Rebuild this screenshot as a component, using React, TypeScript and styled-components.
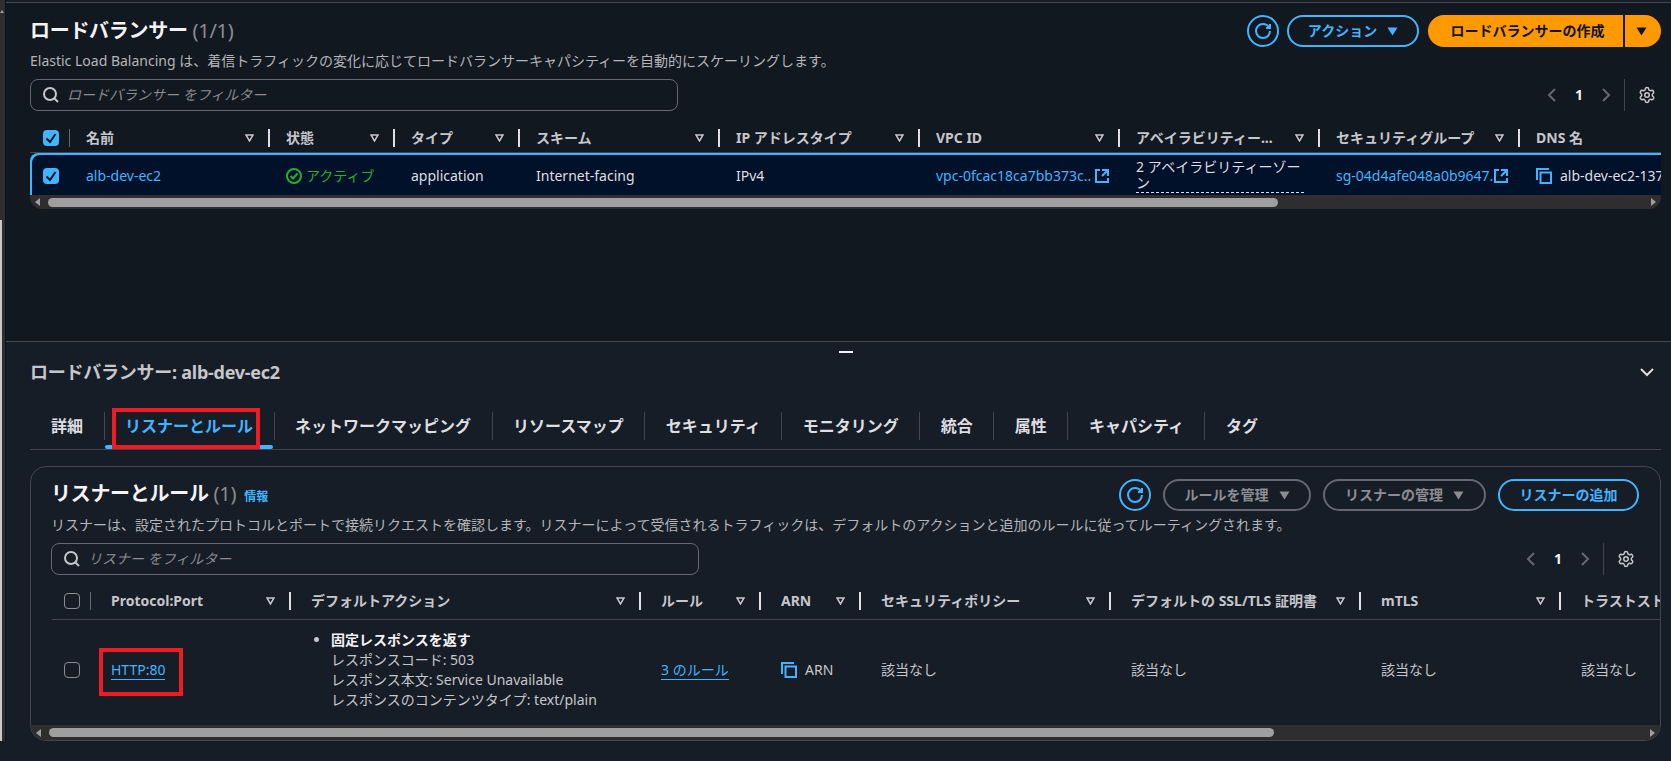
import React from "react";
import styled, { createGlobalStyle } from "styled-components";
import { Settings } from "lucide-react";

const Global = createGlobalStyle`
  html, body { margin: 0; padding: 0; background: #161d26; }
  body { font-family: "Noto Sans", "Noto Sans CJK JP", sans-serif; font-size: 14px; line-height: 20px; color: #c6c6cd; }
  * { box-sizing: border-box; }
`;

const Page = styled.div`
  display: flex;
  width: 1671px;
  height: 761px;
  overflow: hidden;
  background: #161d26;
`;

const SideScroll = styled.div`
  flex: none;
  width: 6px;
  height: 741px;
  background: #2e2e2e;
  border-right: 1px solid #0f141a;
  display: flex;
  flex-direction: column;
  justify-content: space-between;
`;
const SideArrow = styled.div`
  width: 0;
  height: 0;
  margin-top: 10px;
  border-left: 2px solid transparent;
  border-right: 2px solid transparent;
  border-bottom: 3px solid #9f9f9f;
`;
const SideThumb = styled.div`
  width: 2px;
  height: 521px;
  background: #c9c9c9;
`;

const Main = styled.div`
  flex: 1;
  min-width: 0;
  display: flex;
  flex-direction: column;
`;

const TopPanel = styled.section`
  flex: none;
  height: 340px;
  margin-top: 2px;
  border-top: 1px solid #424650;
  border-bottom: 1px solid #424650;
  background: #12181f;
  padding: 12px 10px 0 24px;
`;

const BottomPanel = styled.section`
  flex: 1;
  padding: 0 10px 0 24px;
  background: #161d26;
  display: flex;
  flex-direction: column;
`;

const TitleRow = styled.div`
  display: flex;
  align-items: center;
  justify-content: space-between;
  height: 32px;
`;
const Title = styled.h2`
  margin: 0;
  font-size: 20px;
  line-height: 24px;
  font-weight: 700;
  color: #f3f3f7;
  display: flex;
  align-items: baseline;
  letter-spacing: -0.3px;
`;
const Count = styled.span`
  font-weight: 400;
  color: #8c8c94;
  margin-left: 5px;
`;
const InfoLink = styled.a`
  font-size: 12px;
  font-weight: 700;
  color: #42b4ff;
  letter-spacing: 0;
  margin-left: 8px;
`;
const Actions = styled.div`
  display: flex;
  align-items: center;
`;
const RoundIcon = styled.button<{ $mr: number }>`
  width: 32px;
  height: 32px;
  padding: 0;
  border-radius: 50%;
  border: 2px solid #42b4ff;
  background: transparent;
  color: #42b4ff;
  display: flex;
  align-items: center;
  justify-content: center;
  margin-right: ${(p) => p.$mr}px;
`;
const PillButton = styled.button<{ $w: number; $muted?: boolean }>`
  width: ${(p) => p.$w}px;
  height: 32px;
  padding: 0;
  border-radius: 16px;
  border: 2px solid ${(p) => (p.$muted ? "#656871" : "#42b4ff")};
  background: transparent;
  color: ${(p) => (p.$muted ? "#8c8c94" : "#42b4ff")};
  font: inherit;
  font-weight: 700;
  display: flex;
  align-items: center;
  justify-content: center;
  gap: 10px;
  margin-right: 12px;
  &:last-child { margin-right: 0; }
`;
const SplitButton = styled.div`
  display: flex;
  height: 32px;
  width: 233px;
  color: #0f141a;
  font-weight: 700;
  margin-left: -3px;
`;
const SplitMain = styled.div`
  flex: 1;
  background: #ff9900;
  border-radius: 16px 0 0 16px;
  display: flex;
  align-items: center;
  justify-content: center;
  padding-left: 4px;
`;
const SplitDrop = styled.div`
  width: 36px;
  margin-left: 2px;
  background: #ff9900;
  border-radius: 0 16px 16px 0;
  display: flex;
  align-items: center;
  justify-content: center;
  padding-right: 4px;
`;

const Description = styled.p<{ $mt: number }>`
  margin: ${(p) => p.$mt}px 0 0;
  line-height: 20px;
  color: #b4b4bb;
  white-space: nowrap;
`;

const FilterRow = styled.div<{ $pr: number }>`
  display: flex;
  align-items: center;
  justify-content: space-between;
  height: 32px;
  margin-top: 8px;
  padding-right: ${(p) => p.$pr}px;
`;
const FilterBox = styled.div`
  width: 648px;
  height: 32px;
  border: 1px solid #656871;
  border-radius: 8px;
  display: flex;
  align-items: center;
  padding-left: 12px;
  color: #c6c6cd;
`;
const FilterText = styled.span`
  margin-left: 8px;
  font-style: italic;
  color: #8c8c94;
`;
const Pager = styled.div`
  display: flex;
  align-items: center;
  height: 32px;
  color: #656871;
`;
const PageNumber = styled.span`
  width: 28px;
  margin: 0 8px;
  text-align: center;
  font-weight: 700;
  color: #f3f3f7;
`;
const PagerDivider = styled.div`
  width: 1px;
  height: 32px;
  background: #424650;
  margin: 0 13px 0 13px;
`;
const GearWrap = styled.div`
  display: flex;
  color: #c6c6cd;
`;

const TableWrap = styled.div<{ $mt: number; $ml?: number }>`
  margin: ${(p) => p.$mt}px 0 0 ${(p) => p.$ml ?? 0}px;
  overflow: hidden;
`;
const HeadRow = styled.div<{ $h: number; $pt: number; $pb: number }>`
  display: flex;
  height: ${(p) => p.$h}px;
  border-bottom: 1px solid #424650;
  padding: ${(p) => p.$pt}px 0 ${(p) => p.$pb}px;
  width: 2200px;
`;
const SelectCell = styled.div<{ $w: number; $pl: number }>`
  flex: none;
  width: ${(p) => p.$w}px;
  padding-left: ${(p) => p.$pl}px;
  display: flex;
  align-items: center;
  justify-content: space-between;
`;
const ThinSep = styled.div`
  width: 1px;
  height: 18px;
  background: #5f6b7a;
`;
const HeadCell = styled.div<{ $w: number; $pad: number }>`
  flex: none;
  width: ${(p) => p.$w}px;
  padding-left: ${(p) => p.$pad}px;
  display: flex;
  align-items: center;
  font-weight: 700;
  color: #c6c6cd;
  white-space: nowrap;
`;
const HeadLabel = styled.span`
  flex: 1;
  min-width: 0;
  overflow: hidden;
`;
const HeadSep = styled.div`
  flex: none;
  width: 2px;
  height: 18px;
  background: #dedee3;
  margin-left: 14px;
`;
const SortIcon = styled.svg`
  flex: none;
  width: 9px;
  height: 8px;
  margin-left: 4px;
`;

const SelectedRow = styled.div`
  display: flex;
  align-items: center;
  height: 42px;
  width: 2200px;
  background: #001129;
  box-shadow: inset 2px 2px 0 #42b4ff;
  border-top-left-radius: 8px;
  color: #dedee3;
  padding-top: 4px;
`;
const PlainRow = styled.div`
  display: flex;
  align-items: center;
  height: 105px;
  width: 2200px;
  padding-bottom: 5px;
  color: #c6c6cd;
`;
const Cell = styled.div<{ $w: number; $pad: number }>`
  flex: none;
  width: ${(p) => p.$w}px;
  padding-left: ${(p) => p.$pad}px;
  display: flex;
  align-items: center;
  white-space: nowrap;
`;
const Check = styled.span<{ $on?: boolean }>`
  flex: none;
  width: 16px;
  height: 16px;
  border-radius: 4px;
  display: flex;
  align-items: center;
  justify-content: center;
  background: ${(p) => (p.$on ? "#42b4ff" : "transparent")};
  border: ${(p) => (p.$on ? "none" : "1px solid #8c8c94")};
`;
const Link = styled.a<{ $w?: number }>`
  color: #42b4ff;
  ${(p) => (p.$w ? `width: ${p.$w}px;` : "")}
`;
const LinkIcon = styled.svg`
  flex: none;
  width: 16px;
  height: 16px;
  fill: none;
  stroke: #42b4ff;
  stroke-width: 2;
`;
const OkText = styled.span`
  color: #29ad32;
  margin-left: 4px;
`;
const DashedText = styled.span`
  display: block;
  width: 168px;
  white-space: normal;
  line-height: 16px;
  padding-bottom: 1px;
  border-bottom: 1px dashed #dedee3;
`;
const CopyText = styled.span`
  margin-left: 8px;
`;
const Underlined = styled.a`
  position: relative;
  color: #42b4ff;
  border-bottom: 1px solid #42b4ff;
  line-height: 18px;
`;
const Annotation = styled.span<{ $t: number; $r: number; $b: number; $l: number }>`
  position: absolute;
  top: ${(p) => p.$t}px;
  right: ${(p) => p.$r}px;
  bottom: ${(p) => p.$b}px;
  left: ${(p) => p.$l}px;
  border: 4px solid #ed1c24;
  pointer-events: none;
`;

const ActionList = styled.ul`
  margin: 0;
  padding: 0 0 0 20px;
  line-height: 20px;
`;
const ActionItem = styled.li`
  color: #c6c6cd;
  &::marker { color: #c6c6cd; }
`;
const ActionHead = styled.div`
  font-weight: 700;
  color: #f3f3f7;
`;

const ScrollTrack = styled.div<{ $h: number; $r: number }>`
  height: ${(p) => p.$h}px;
  background: #2e2e2e;
  border-radius: 0 0 ${(p) => p.$r}px ${(p) => p.$r}px;
  display: flex;
  align-items: center;
  padding: 0 5px;
`;
const ScrollArrow = styled.span<{ $dir: "l" | "r"; $w: number }>`
  flex: none;
  width: 0;
  height: 0;
  border-top: 4px solid transparent;
  border-bottom: 4px solid transparent;
  ${(p) => (p.$dir === "l" ? "border-right" : "border-left")}: 5px solid #9f9f9f;
  margin-right: ${(p) => p.$w}px;
`;
const ScrollThumb = styled.span<{ $w: number }>`
  flex: none;
  width: ${(p) => p.$w}px;
  height: 9px;
  border-radius: 5px;
  background: #9f9f9f;
`;
const Spring = styled.span`
  flex: 1;
`;

const Handle = styled.div`
  flex: none;
  align-self: center;
  width: 14px;
  height: 2px;
  margin: 9px 0 0;
  background: #f3f3f7;
`;
const DetailHead = styled.div`
  display: flex;
  align-items: center;
  justify-content: space-between;
  height: 24px;
  margin-top: 7px;
  padding-right: 6px;
`;
const DetailTitle = styled.h3`
  margin: 0;
  font-size: 18px;
  line-height: 24px;
  font-weight: 700;
  color: #c6c6cd;
  letter-spacing: -0.25px;
`;
const TabBar = styled.nav`
  display: flex;
  align-items: flex-start;
  height: 38px;
  margin-top: 28px;
  padding-left: 0.5px;
  border-bottom: 1px solid #424650;
`;
const Tab = styled.div<{ $active?: boolean; $last?: boolean }>`
  position: relative;
  flex: none;
  display: flex;
  align-items: center;
  height: 28px;
  padding: 0 20.5px;
  font-size: 16px;
  font-weight: 700;
  color: ${(p) => (p.$active ? "#42b4ff" : "#dedee3")};
  border-right: ${(p) => (p.$last ? "none" : "1px solid #424650")};
`;
const TabLine = styled.span`
  position: absolute;
  left: 0;
  right: 1px;
  top: 33px;
  height: 4px;
  border-radius: 2px;
  background: #42b4ff;
`;
const Card = styled.div`
  margin-top: 16px;
  height: 275px;
  border: 1px solid #424650;
  border-radius: 16px;
  overflow: hidden;
  display: flex;
  flex-direction: column;
`;
const CardHead = styled.div`
  padding: 12px 21px 0 20px;
`;

const Caret = ({ color }: { color: string }) => (
  <svg width="11" height="9" viewBox="0 0 11 9"><path d="M0.5 0.5h10L5.5 8.5z" fill={color} /></svg>
);
const Refresh = () => (
  <svg width="16" height="16" viewBox="0 0 16 16" fill="none" stroke="currentColor" strokeWidth="2">
    <path d="M15 8c0 3.87-3.13 7-7 7s-7-3.13-7-7 3.13-7 7-7c2.79 0 5.2 1.63 6.33 4" />
    <path d="M15 1v4h-4" />
  </svg>
);
const Search = () => (
  <svg width="16" height="16" viewBox="0 0 16 16" fill="none" stroke="currentColor" strokeWidth="2">
    <circle cx="7" cy="7" r="6" /><path d="m11 11 4 4" />
  </svg>
);
const Chevron = ({ dir }: { dir: "l" | "r" }) => (
  <svg width="10" height="14" viewBox="0 0 10 14" fill="none" stroke="currentColor" strokeWidth="2">
    <path d={dir === "l" ? "M8 1 2 7l6 6" : "M2 1l6 6-6 6"} />
  </svg>
);
const Sort = () => (
  <SortIcon viewBox="0 0 9 8"><path d="M1 1h7L4.5 7z" fill="none" stroke="#c6c6cd" strokeWidth="1.5" /></SortIcon>
);
const Tick = () => (
  <svg width="12" height="12" viewBox="0 0 12 12" fill="none" stroke="#0f141a" strokeWidth="2"><path d="M1.5 6.5 5 10l5.5-8" /></svg>
);
const ExternalIcon = () => (
  <LinkIcon viewBox="0 0 16 16"><path d="M14 8.01v-6H8M14.02 2 8 8.01M6 2.01H2v12h12v-3.99" /></LinkIcon>
);
const CopyIcon = () => (
  <LinkIcon viewBox="0 0 16 16"><path d="M1 12V1h12" /><rect x="4.5" y="4.5" width="10.5" height="10.5" /></LinkIcon>
);
const OkIcon = () => (
  <svg width="16" height="16" viewBox="0 0 16 16" fill="none" stroke="#29ad32" strokeWidth="2">
    <circle cx="8" cy="8" r="7" /><path d="m4.5 8 2.5 2.5 4.5-5" />
  </svg>
);
const PagerChunk = () => (
  <Pager>
    <Chevron dir="l" /><PageNumber>1</PageNumber><Chevron dir="r" />
    <PagerDivider />
    <GearWrap><Settings size={18} strokeWidth={2} /></GearWrap>
  </Pager>
);

const topCols: [string, number][] = [
  ["名前", 200], ["状態", 125], ["タイプ", 125], ["スキーム", 200], ["IP アドレスタイプ", 200],
  ["VPC ID", 200], ["アベイラビリティー...", 200], ["セキュリティグループ", 200],
];
const bottomCols: [string, number][] = [
  ["Protocol:Port", 200], ["デフォルトアクション", 350], ["ルール", 120], ["ARN", 100],
  ["セキュリティポリシー", 250], ["デフォルトの SSL/TLS 証明書", 250], ["mTLS", 200],
];
const tabs = ["詳細", "リスナーとルール", "ネットワークマッピング", "リソースマップ", "セキュリティ", "モニタリング", "統合", "属性", "キャパシティ", "タグ"];

export default function App() {
  return (
    <>
      <Global />
      <Page>
        <SideScroll>
          <SideArrow />
          <SideThumb />
        </SideScroll>
        <Main>
          <TopPanel>
            <TitleRow>
              <Title>ロードバランサー<Count>(1/1)</Count></Title>
              <Actions>
                <RoundIcon $mr={8}><Refresh /></RoundIcon>
                <PillButton $w={132}>アクション<Caret color="#42b4ff" /></PillButton>
                <SplitButton>
                  <SplitMain>ロードバランサーの作成</SplitMain>
                  <SplitDrop><Caret color="#0f141a" /></SplitDrop>
                </SplitButton>
              </Actions>
            </TitleRow>
            <Description $mt={4}>Elastic Load Balancing は、着信トラフィックの変化に応じてロードバランサーキャパシティーを自動的にスケーリングします。</Description>
            <FilterRow $pr={5}>
              <FilterBox><Search /><FilterText>ロードバランサー をフィルター</FilterText></FilterBox>
              <PagerChunk />
            </FilterRow>
            <TableWrap $mt={9}>
              <HeadRow $h={33} $pt={3} $pb={0}>
                <SelectCell $w={40} $pl={13}><Check $on><Tick /></Check><ThinSep /></SelectCell>
                {topCols.map(([label, w]) => (
                  <HeadCell key={label} $w={w} $pad={16}><HeadLabel>{label}</HeadLabel><Sort /><HeadSep /></HeadCell>
                ))}
                <HeadCell $w={200} $pad={16}>DNS 名</HeadCell>
              </HeadRow>
              <SelectedRow>
                <SelectCell $w={40} $pl={13}><Check $on><Tick /></Check></SelectCell>
                <Cell $w={200} $pad={16}><Link>alb-dev-ec2</Link></Cell>
                <Cell $w={125} $pad={16}><OkIcon /><OkText>アクティブ</OkText></Cell>
                <Cell $w={125} $pad={16}>application</Cell>
                <Cell $w={200} $pad={16}>Internet-facing</Cell>
                <Cell $w={200} $pad={16}>IPv4</Cell>
                <Cell $w={200} $pad={16}><Link $w={158}>vpc-0fcac18ca7bb373c..</Link><ExternalIcon /></Cell>
                <Cell $w={200} $pad={16}><DashedText>2 アベイラビリティーゾーン</DashedText></Cell>
                <Cell $w={200} $pad={16}><Link>sg-04d4afe048a0b9647.</Link><ExternalIcon /></Cell>
                <Cell $w={200} $pad={16}><CopyIcon /><CopyText>alb-dev-ec2-137</CopyText></Cell>
              </SelectedRow>
              <ScrollTrack $h={14} $r={12}>
                <ScrollArrow $dir="l" $w={8} />
                <ScrollThumb $w={1230} />
                <Spring />
                <ScrollArrow $dir="r" $w={0} />
              </ScrollTrack>
            </TableWrap>
          </TopPanel>
          <BottomPanel>
            <Handle />
            <DetailHead>
              <DetailTitle>ロードバランサー: alb-dev-ec2</DetailTitle>
              <svg width="16" height="16" viewBox="0 0 16 16" fill="none" stroke="#dedee3" strokeWidth="2"><path d="m2 5 6 6 6-6" /></svg>
            </DetailHead>
            <TabBar>
              {tabs.map((t, i) => (
                <Tab key={t} $active={i === 1} $last={i === tabs.length - 1}>
                  {t}
                  {i === 1 && <TabLine />}
                  {i === 1 && <Annotation $t={-4} $r={14} $b={-9} $l={7} />}
                </Tab>
              ))}
            </TabBar>
            <Card>
              <CardHead>
                <TitleRow>
                  <Title>リスナーとルール<Count>(1)</Count><InfoLink>情報</InfoLink></Title>
                  <Actions>
                    <RoundIcon $mr={12}><Refresh /></RoundIcon>
                    <PillButton $w={148} $muted>ルールを管理<Caret color="#8c8c94" /></PillButton>
                    <PillButton $w={163} $muted>リスナーの管理<Caret color="#8c8c94" /></PillButton>
                    <PillButton $w={141}>リスナーの追加</PillButton>
                  </Actions>
                </TitleRow>
                <Description $mt={4}>リスナーは、設定されたプロトコルとポートで接続リクエストを確認します。リスナーによって受信されるトラフィックは、デフォルトのアクションと追加のルールに従ってルーティングされます。</Description>
                <FilterRow $pr={4}>
                  <FilterBox><Search /><FilterText>リスナー をフィルター</FilterText></FilterBox>
                  <PagerChunk />
                </FilterRow>
              </CardHead>
              <TableWrap $mt={10} $ml={21}>
                <HeadRow $h={35} $pt={0} $pb={2}>
                  <SelectCell $w={39} $pl={12}><Check /><ThinSep /></SelectCell>
                  {bottomCols.map(([label, w]) => (
                    <HeadCell key={label} $w={w} $pad={20}><HeadLabel>{label}</HeadLabel><Sort /><HeadSep /></HeadCell>
                  ))}
                  <HeadCell $w={200} $pad={20}>トラストストア</HeadCell>
                </HeadRow>
                <PlainRow>
                  <SelectCell $w={39} $pl={12}><Check /></SelectCell>
                  <Cell $w={200} $pad={20}>
                    <Underlined>HTTP:80<Annotation $t={-13} $r={-18} $b={-17} $l={-12} /></Underlined>
                  </Cell>
                  <Cell $w={350} $pad={20}>
                    <ActionList>
                      <ActionItem>
                        <ActionHead>固定レスポンスを返す</ActionHead>
                        レスポンスコード: 503<br />
                        レスポンス本文: Service Unavailable<br />
                        レスポンスのコンテンツタイプ: text/plain
                      </ActionItem>
                    </ActionList>
                  </Cell>
                  <Cell $w={120} $pad={20}><Underlined>3 のルール</Underlined></Cell>
                  <Cell $w={100} $pad={20}><CopyIcon /><CopyText>ARN</CopyText></Cell>
                  <Cell $w={250} $pad={20}>該当なし</Cell>
                  <Cell $w={250} $pad={20}>該当なし</Cell>
                  <Cell $w={200} $pad={20}>該当なし</Cell>
                  <Cell $w={200} $pad={20}>該当なし</Cell>
                </PlainRow>
              </TableWrap>
              <ScrollTrack $h={15} $r={0}>
                <ScrollArrow $dir="l" $w={8} />
                <ScrollThumb $w={1225} />
                <Spring />
                <ScrollArrow $dir="r" $w={0} />
              </ScrollTrack>
            </Card>
          </BottomPanel>
        </Main>
      </Page>
    </>
  );
}
